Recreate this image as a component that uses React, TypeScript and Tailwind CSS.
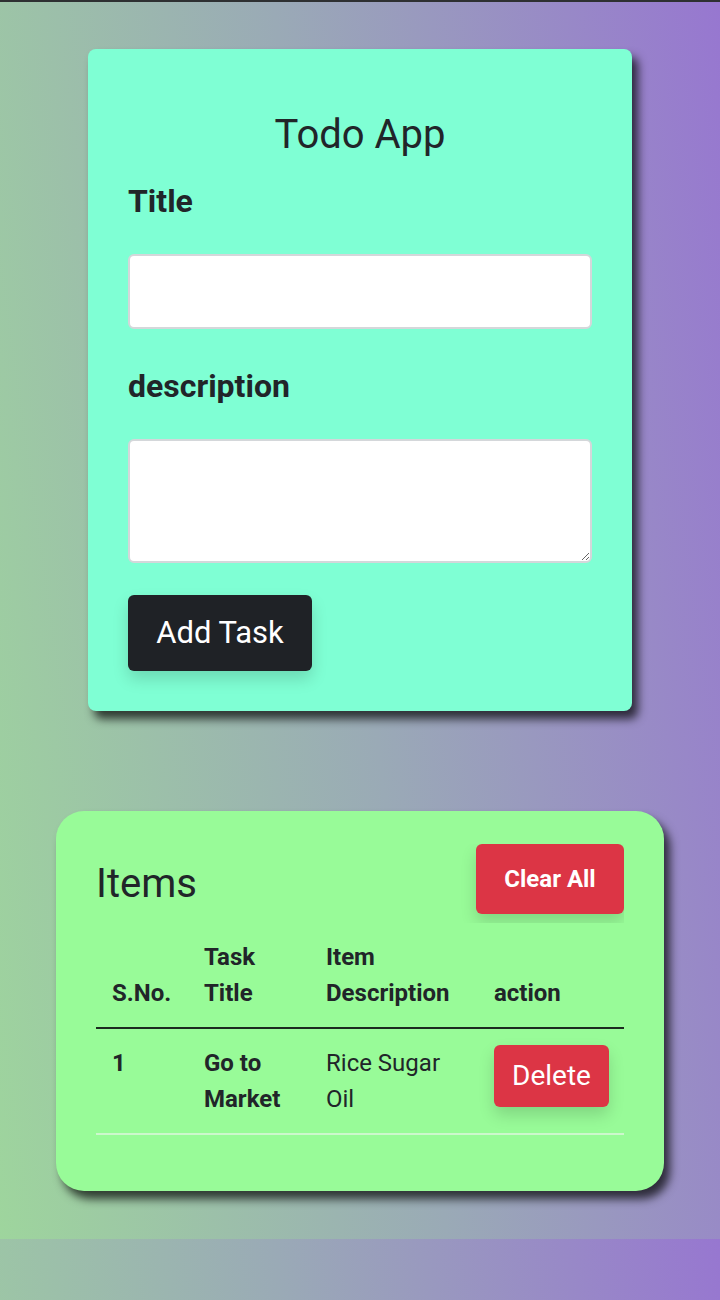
import React from "react";

const font = { fontFamily: "Roboto, 'Liberation Sans', sans-serif" };

export default function App() {
  return (
    <div
      style={font}
      className="min-h-[1300px] border-t-2 border-[#2e3032] bg-[linear-gradient(82deg,#9ed59d,#9aaab6_50%,#9777d0)] bg-[length:100%_1239px] bg-origin-border bg-repeat-y text-[#212529]"
    >
      {/* FORM CARD */}
      <div className="mx-auto mt-[47px] w-[544px] rounded-lg bg-[#7fffd4] p-10 shadow-[6px_8px_10px_rgba(0,0,0,0.7)]">
        <h1 className="mt-[22px] text-center text-[40px] leading-[48px] font-normal">
          Todo App
        </h1>

        <label className="mt-[23px] mb-[34px] block text-[32px] leading-[38px] font-bold">
          Title
        </label>
        <input
          type="text"
          className="block h-[75px] w-full rounded-md border-2 border-[#d4d7da] bg-white px-3 outline-none"
        />

        <label className="mt-[38px] mb-[34px] block text-[32px] leading-[38px] font-bold">
          description
        </label>
        <textarea className="block h-[124px] w-full rounded-md border-2 border-[#d4d7da] bg-white px-3 outline-none" />

        <button className="mt-8 h-[76px] w-[184px] rounded-md bg-[#1f2226] text-[31px] text-white shadow-[0_8px_16px_rgba(0,0,0,0.15)]">
          Add Task
        </button>
      </div>

      {/* LIST CARD */}
      <div className="mx-auto mt-[100px] w-[608px] rounded-[28px] bg-[#98fb98] px-10 pt-[33px] pb-10 shadow-[6px_8px_10px_rgba(0,0,0,0.7)]">
        <div className="flex items-center justify-between overflow-hidden">
          <h2 className="text-[40px] leading-[48px] font-normal">Items</h2>
          <button className="mb-[9px] h-[70px] w-[148px] rounded-md bg-[#dc3545] text-[24px] font-bold text-white shadow-[0_8px_16px_rgba(0,0,0,0.15)]">
            Clear All
          </button>
        </div>

        <div className="mb-[16px] overflow-hidden">
          <table className="w-full table-fixed text-[24px] leading-[36px]">
            <colgroup>
              <col className="w-[92px]" />
              <col className="w-[122px]" />
              <col className="w-[168px]" />
              <col className="w-[146px]" />
            </colgroup>
            <thead>
              <tr className="border-b-2 border-[#1c2a1f]">
                <th className="p-4 text-left align-bottom font-bold">S.No.</th>
                <th className="p-4 text-left align-bottom font-bold">Task Title</th>
                <th className="p-4 text-left align-bottom font-bold">Item Description</th>
                <th className="p-4 text-left align-bottom font-bold">action</th>
              </tr>
            </thead>
            <tbody>
              <tr className="border-b-2 border-[#cdf7cd]">
                <td className="p-4 align-top font-bold">1</td>
                <td className="p-4 align-top font-bold">Go to Market</td>
                <td className="p-4 align-top">Rice Sugar Oil</td>
                <td className="p-4 align-top">
                  <button className="h-[62px] w-[115px] rounded-md bg-[#dc3545] text-[28px] text-white shadow-[0_8px_16px_rgba(0,0,0,0.15)]">
                    Delete
                  </button>
                </td>
              </tr>
            </tbody>
          </table>
        </div>
      </div>
    </div>
  );
}
